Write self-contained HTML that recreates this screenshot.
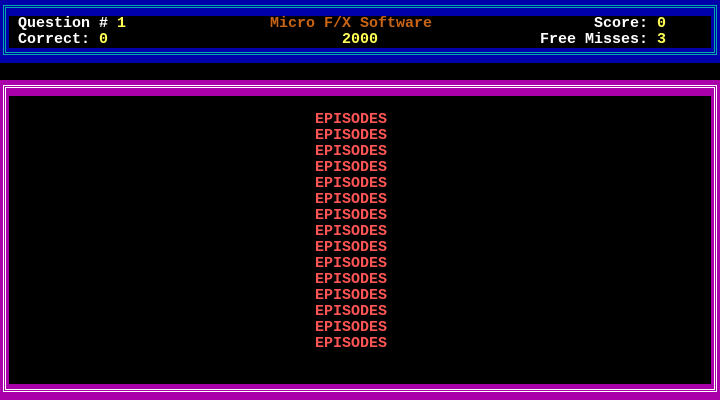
<!DOCTYPE html>
<html><head><style>
body{margin:0;width:720px;height:400px;background:#000;position:relative;overflow:hidden;font-family:"Liberation Mono",monospace;font-weight:bold;font-size:15px;line-height:16px}
div{position:absolute;box-sizing:border-box}
.t{white-space:pre;letter-spacing:0px}
.w{color:#fff}.y{color:#ffff55}.o{color:#c86414}.r{color:#ff5555}
</style></head><body>
<div style="left:0;top:0;width:720px;height:63px;background:#0000aa"></div>
<div style="left:3px;top:5px;width:714px;height:50px;border:1px solid #00aaaa"></div>
<div style="left:5px;top:7px;width:710px;height:46px;border:1px solid #00aaaa"></div>
<div style="left:9px;top:16px;width:702px;height:32px;background:#000"></div>
<div style="left:0;top:80px;width:720px;height:320px;background:#aa00aa"></div>
<div style="left:3px;top:85px;width:714px;height:307px;border:1px solid #fff"></div>
<div style="left:5px;top:87px;width:710px;height:303px;border:1px solid #fff"></div>
<div style="left:9px;top:96px;width:702px;height:288px;background:#000"></div>
<div class="t" style="left:18px;top:16px"><span class="w">Question # </span><span class="y">1</span></div>
<div class="t" style="left:18px;top:32px"><span class="w">Correct: </span><span class="y">0</span></div>
<div class="t o" style="left:270px;top:16px">Micro F/X Software</div>
<div class="t y" style="left:342px;top:32px">2000</div>
<div class="t" style="left:594px;top:16px"><span class="w">Score: </span><span class="y">0</span></div>
<div class="t" style="left:540px;top:32px"><span class="w">Free Misses: </span><span class="y">3</span></div>
<div class="t r" style="left:315px;top:112px">EPISODES
EPISODES
EPISODES
EPISODES
EPISODES
EPISODES
EPISODES
EPISODES
EPISODES
EPISODES
EPISODES
EPISODES
EPISODES
EPISODES
EPISODES</div>
</body></html>
